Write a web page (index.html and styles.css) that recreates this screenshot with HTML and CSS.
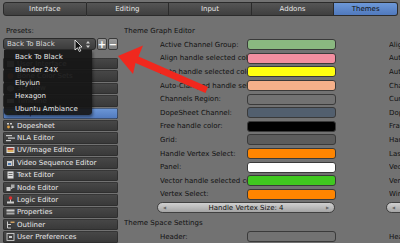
FILE: index.html
```html
<!DOCTYPE html>
<html lang="en">
<head>
    <meta charset="UTF-8">
    <title>User Preferences - Themes</title>
    <link rel="stylesheet" href="styles.css">
</head>
<body>
    <div class="tabs">
        <div class="tab">Interface</div>
        <div class="tab">Editing</div>
        <div class="tab">Input</div>
        <div class="tab">Addons</div>
        <div class="tab active">Themes</div>
    </div>

    <div class="main">
        <div class="sidebar">
            <div class="caption">Presets:</div>
            <div class="preset-row">
                <div class="preset-select">
                    <span>Back To Black</span>
                    <svg class="updown" width="6" height="9" viewBox="0 0 6 9"><path d="M1 3.5 L3 1 L5 3.5 Z M1 5.5 L3 8 L5 5.5 Z" fill="#cfcfcf"/></svg>
                </div>
                <div class="mini-btn">+</div>
                <div class="mini-btn">&minus;</div>
            </div>

            <div class="menu">
                <div class="menu-item">Back To Black</div>
                <div class="menu-item">Blender 24X</div>
                <div class="menu-item">Elsyiun</div>
                <div class="menu-item">Hexagon</div>
                <div class="menu-item">Ubuntu Ambiance</div>
            </div>

            <div class="editor-list">
                <div class="editor"><svg class="ico" viewBox="0 0 9 8"><rect x="1" y="1" width="7" height="6" fill="#bbb"/></svg>User Interface</div>
                <div class="editor"><svg class="ico" viewBox="0 0 9 8"><circle cx="4.5" cy="4" r="3" fill="#c06040"/></svg>Bone Color Sets</div>
                <div class="editor"><svg class="ico" viewBox="0 0 9 8"><path d="M1 3 L4.5 1 L8 3 L8 6 L4.5 8 L1 6 Z" fill="#aaa"/></svg>3D View</div>
                <div class="editor"><svg class="ico" viewBox="0 0 9 8"><rect x="1" y="2" width="7" height="4" fill="#ccc"/></svg>Timeline</div>
                <div class="editor selected"><svg class="ico" viewBox="0 0 9 8"><path d="M1 6 Q4 0 8 4" stroke="#7ad04a" stroke-width="1.5" fill="none"/></svg>Graph Editor</div>
                <div class="editor"><svg class="ico" viewBox="0 0 9 8"><rect x="1" y="1" width="2" height="1.5" fill="#ccc"/><rect x="4" y="1" width="2" height="1.5" fill="#ccc"/><circle cx="2.5" cy="5" r="1.4" fill="#e0a040"/><circle cx="6.5" cy="5" r="1.2" fill="#ccc"/></svg>Dopesheet</div>
                <div class="editor"><svg class="ico" viewBox="0 0 9 8"><rect x="0" y="1" width="6" height="1.2" fill="#ccc"/><rect x="2" y="3.5" width="7" height="1.2" fill="#ccc"/><rect x="0" y="6" width="5" height="1.2" fill="#ccc"/></svg>NLA Editor</div>
                <div class="editor"><svg class="ico" viewBox="0 0 9 8"><rect x="0.5" y="1" width="8" height="6" fill="#ddd"/><rect x="1.5" y="2" width="6" height="2" fill="#b05040"/><rect x="1.5" y="4" width="6" height="2" fill="#d8b060"/></svg>UV/Image Editor</div>
                <div class="editor"><svg class="ico" viewBox="0 0 9 8"><rect x="1" y="2" width="5" height="5" fill="#ccc"/><rect x="2" y="4" width="3" height="2" fill="#4a78b0"/><rect x="6.5" y="0.5" width="1.5" height="6.5" fill="#ccc"/></svg>Video Sequence Editor</div>
                <div class="editor"><svg class="ico" viewBox="0 0 9 8"><rect x="1.5" y="0.5" width="6" height="7" fill="#ddd"/><rect x="2.5" y="2" width="4" height="0.8" fill="#555"/><rect x="2.5" y="4" width="4" height="0.8" fill="#555"/></svg>Text Editor</div>
                <div class="editor"><svg class="ico" viewBox="0 0 9 8"><rect x="0.5" y="3" width="4" height="4" fill="#ccc"/><rect x="5" y="0.5" width="3.5" height="3.5" fill="#aaa"/><path d="M4.5 5 L6.5 4" stroke="#ddd" stroke-width="0.8"/></svg>Node Editor</div>
                <div class="editor"><svg class="ico" viewBox="0 0 9 8"><rect x="1" y="5.5" width="7" height="2" fill="#ccc"/><rect x="4" y="2" width="1" height="4" fill="#ccc"/><circle cx="4.5" cy="2" r="1.8" fill="#d83030"/></svg>Logic Editor</div>
                <div class="editor"><svg class="ico" viewBox="0 0 9 8"><rect x="0.5" y="1.5" width="8" height="2" fill="#ccc"/><rect x="0.5" y="4.5" width="8" height="2" fill="#aaa"/></svg>Properties</div>
                <div class="editor"><svg class="ico" viewBox="0 0 9 8"><path d="M1.5 0.5 L1.5 7 M1.5 3.5 L5 3.5 M1.5 7 L5 7" stroke="#ccc" stroke-width="1"/><rect x="4.5" y="0.5" width="4" height="1.5" fill="#d0a060"/></svg>Outliner</div>
                <div class="editor"><svg class="ico" viewBox="0 0 9 8"><rect x="1" y="0.5" width="7" height="7" fill="none" stroke="#ccc" stroke-width="0.9"/><rect x="3" y="3" width="3" height="2" fill="#ccc"/></svg>User Preferences</div>
            </div>
        </div>

        <div class="panel">
            <div class="caption">Theme Graph Editor</div>
            <div class="columns">
                <div class="col">
                    <div class="row"><span class="label">Active Channel Group:</span><span class="swatch" style="background:#8ab880"></span></div>
                    <div class="row"><span class="label">Align handle selected color:</span><span class="swatch" style="background:#f28ea0"></span></div>
                    <div class="row"><span class="label">Auto handle selected color:</span><span class="swatch" style="background:#ffff10"></span></div>
                    <div class="row"><span class="label">Auto-Clamped handle selected color:</span><span class="swatch" style="background:#f5b08a"></span></div>
                    <div class="row"><span class="label">Channels Region:</span><span class="swatch" style="background:#727272"></span></div>
                    <div class="row"><span class="label">DopeSheet Channel:</span><span class="swatch" style="background:#525f6e"></span></div>
                    <div class="row"><span class="label">Free handle color:</span><span class="swatch" style="background:#000000"></span></div>
                    <div class="row"><span class="label">Grid:</span><span class="swatch" style="background:#5c5c5c"></span></div>
                    <div class="row"><span class="label">Handle Vertex Select:</span><span class="swatch" style="background:#ff8500"></span></div>
                    <div class="row"><span class="label">Panel:</span><span class="swatch" style="background:#ffffff"></span></div>
                    <div class="row"><span class="label">Vector handle selected color:</span><span class="swatch" style="background:#40c820"></span></div>
                    <div class="row"><span class="label">Vertex Select:</span><span class="swatch" style="background:#ff8500"></span></div>
                    <div class="row"><div class="slider"><span class="tri">&#9664;</span><span>Handle Vertex Size: 4</span><span class="tri">&#9654;</span></div></div>
                </div>
                <div class="col">
                    <div class="row"><span class="label">Align handle color:</span></div>
                    <div class="row"><span class="label">Auto handle color:</span></div>
                    <div class="row"><span class="label">Auto-Clamped handle color:</span></div>
                    <div class="row"><span class="label">Channel Group:</span></div>
                    <div class="row"><span class="label">Current Frame:</span></div>
                    <div class="row"><span class="label">Dope Sheet Sub-Channel:</span></div>
                    <div class="row"><span class="label">Frame Number Text:</span></div>
                    <div class="row"><span class="label">Handle Vertex:</span></div>
                    <div class="row"><span class="label">Last Selected Point:</span></div>
                    <div class="row"><span class="label">Vector handle color:</span></div>
                    <div class="row"><span class="label">Vertex:</span></div>
                    <div class="row"><span class="label">Window Background:</span></div>
                    <div class="row"><div class="slider"><span class="tri">&#9664;</span><span>Vertex Size: 3</span><span class="tri">&#9654;</span></div></div>
                </div>
            </div>
            <div class="caption sub">Theme Space Settings</div>
            <div class="columns">
                <div class="col">
                    <div class="row"><span class="label">Header:</span><span class="swatch" style="background:#727272"></span></div>
                </div>
                <div class="col">
                    <div class="row"><span class="label">Header Text:</span></div>
                </div>
            </div>
        </div>
    </div>

    <!-- pointer arrow drawn over the screenshot -->
    <svg class="overlay" width="400" height="243" viewBox="0 0 400 243">
        <path d="M118 56 L143 45.5 L138.5 56.5 L208 87 L205.5 93 L135.5 63 L133 74 Z" fill="#f0281e"/>
        <path d="M75 40 L75 50 L77.5 47.8 L79.3 51.5 L80.8 50.8 L79 47.2 L82 47 Z" fill="#111" stroke="#fff" stroke-width="0.8"/>
    </svg>
</body>
</html>
```

FILE: styles.css
```css
body {
    margin: 0;
    width: 400px;
    height: 243px;
    overflow: hidden;
    background: #727272;
    font-family: "DejaVu Sans", sans-serif;
    font-size: 7px;
    color: #111;
    position: relative;
}
.tabs {
    display: flex;
    margin: 2px 2px 0 3px;
    height: 14px;
}
.tab {
    flex: 82 1 0;
    display: flex;
    align-items: center;
    justify-content: center;
    background: linear-gradient(#555, #3f3f3f);
    border: 1px solid #2b2b2b;
    border-left: none;
    color: #e6e6e6;
}
.tab:first-child {
    border-left: 1px solid #2b2b2b;
    border-radius: 3px 0 0 3px;
}
.tab.active {
    flex: 63 1 0;
    background: linear-gradient(#6d98d8, #5079bd);
    color: #111;
    border-radius: 0 3px 3px 0;
}
.main {
    display: flex;
}
.sidebar {
    width: 115px;
    margin-left: 3px;
    position: relative;
}
.caption {
    height: 14px;
    line-height: 14px;
    margin-top: 8px;
    padding-left: 3px;
}
.preset-row {
    display: flex;
    height: 12px;
}
.preset-select {
    width: 93px;
    display: flex;
    align-items: center;
    justify-content: space-between;
    padding: 0 4px 0 3px;
    box-sizing: border-box;
    background: linear-gradient(#505050, #3c3c3c);
    border: 1px solid #2a2a2a;
    border-radius: 3px;
    color: #d8d8d8;
}
.mini-btn {
    width: 10px;
    margin-left: 1px;
    display: flex;
    align-items: center;
    justify-content: center;
    box-sizing: border-box;
    background: linear-gradient(#9a9a9a, #7c7c7c);
    border: 1px solid #3a3a3a;
    border-radius: 2px;
    color: #fff;
    font-size: 10px;
    font-weight: bold;
}
.menu {
    position: absolute;
    top: 34px;
    left: 1px;
    width: 88px;
    height: 65px;
    padding-top: 1px;
    box-sizing: border-box;
    background: rgba(22, 22, 22, 0.93);
    border-radius: 0 0 3px 3px;
    box-shadow: 1px 2px 3px rgba(0, 0, 0, 0.45);
    z-index: 2;
}
.menu-item {
    height: 13px;
    line-height: 13px;
    padding-left: 11px;
    color: #e8e8e8;
}
.editor-list {
    margin-top: 8px;
    display: flex;
    flex-direction: column;
    gap: 1px;
}
.editor {
    height: 11.4px;
    display: flex;
    align-items: center;
    padding-left: 3px;
    background: linear-gradient(#484848, #383838);
    border-radius: 2px;
    box-shadow: inset 0 0 0 0.6px #262626;
    color: #e8e8e8;
    white-space: nowrap;
}
.editor.selected {
    background: linear-gradient(#6d98d8, #5079bd);
    color: #111;
}
.ico {
    width: 9px;
    height: 8px;
    margin-right: 2px;
    flex-shrink: 0;
}
.panel {
    margin-left: 6px;
    flex: 1;
    min-width: 0;
    overflow: hidden;
}
.panel .caption {
    padding-left: 0;
}
.panel .caption.sub {
    margin-top: 1px;
}
.columns {
    display: flex;
    gap: 53px;
    padding-left: 36px;
    white-space: nowrap;
}
.col {
    width: 176px;
    flex-shrink: 0;
}
.row {
    height: 13.6px;
    display: flex;
    align-items: center;
}
.label {
    width: 87px;
    overflow: hidden;
    flex-shrink: 0;
}
.swatch {
    width: 89px;
    height: 11px;
    box-sizing: border-box;
    border: 1px solid #3a3a3a;
    border-radius: 3px;
}
.slider {
    width: 178px;
    height: 11px;
    margin-left: -3px;
    box-sizing: border-box;
    display: flex;
    align-items: center;
    justify-content: space-between;
    padding: 0 5px;
    background: linear-gradient(#d0d0d0, #a4a4a4);
    border: 1px solid #404040;
    border-radius: 6px;
    color: #111;
}
.tri {
    font-size: 4px;
    color: #666;
}
.overlay {
    position: absolute;
    top: 0;
    left: 0;
    pointer-events: none;
    z-index: 5;
}
```
